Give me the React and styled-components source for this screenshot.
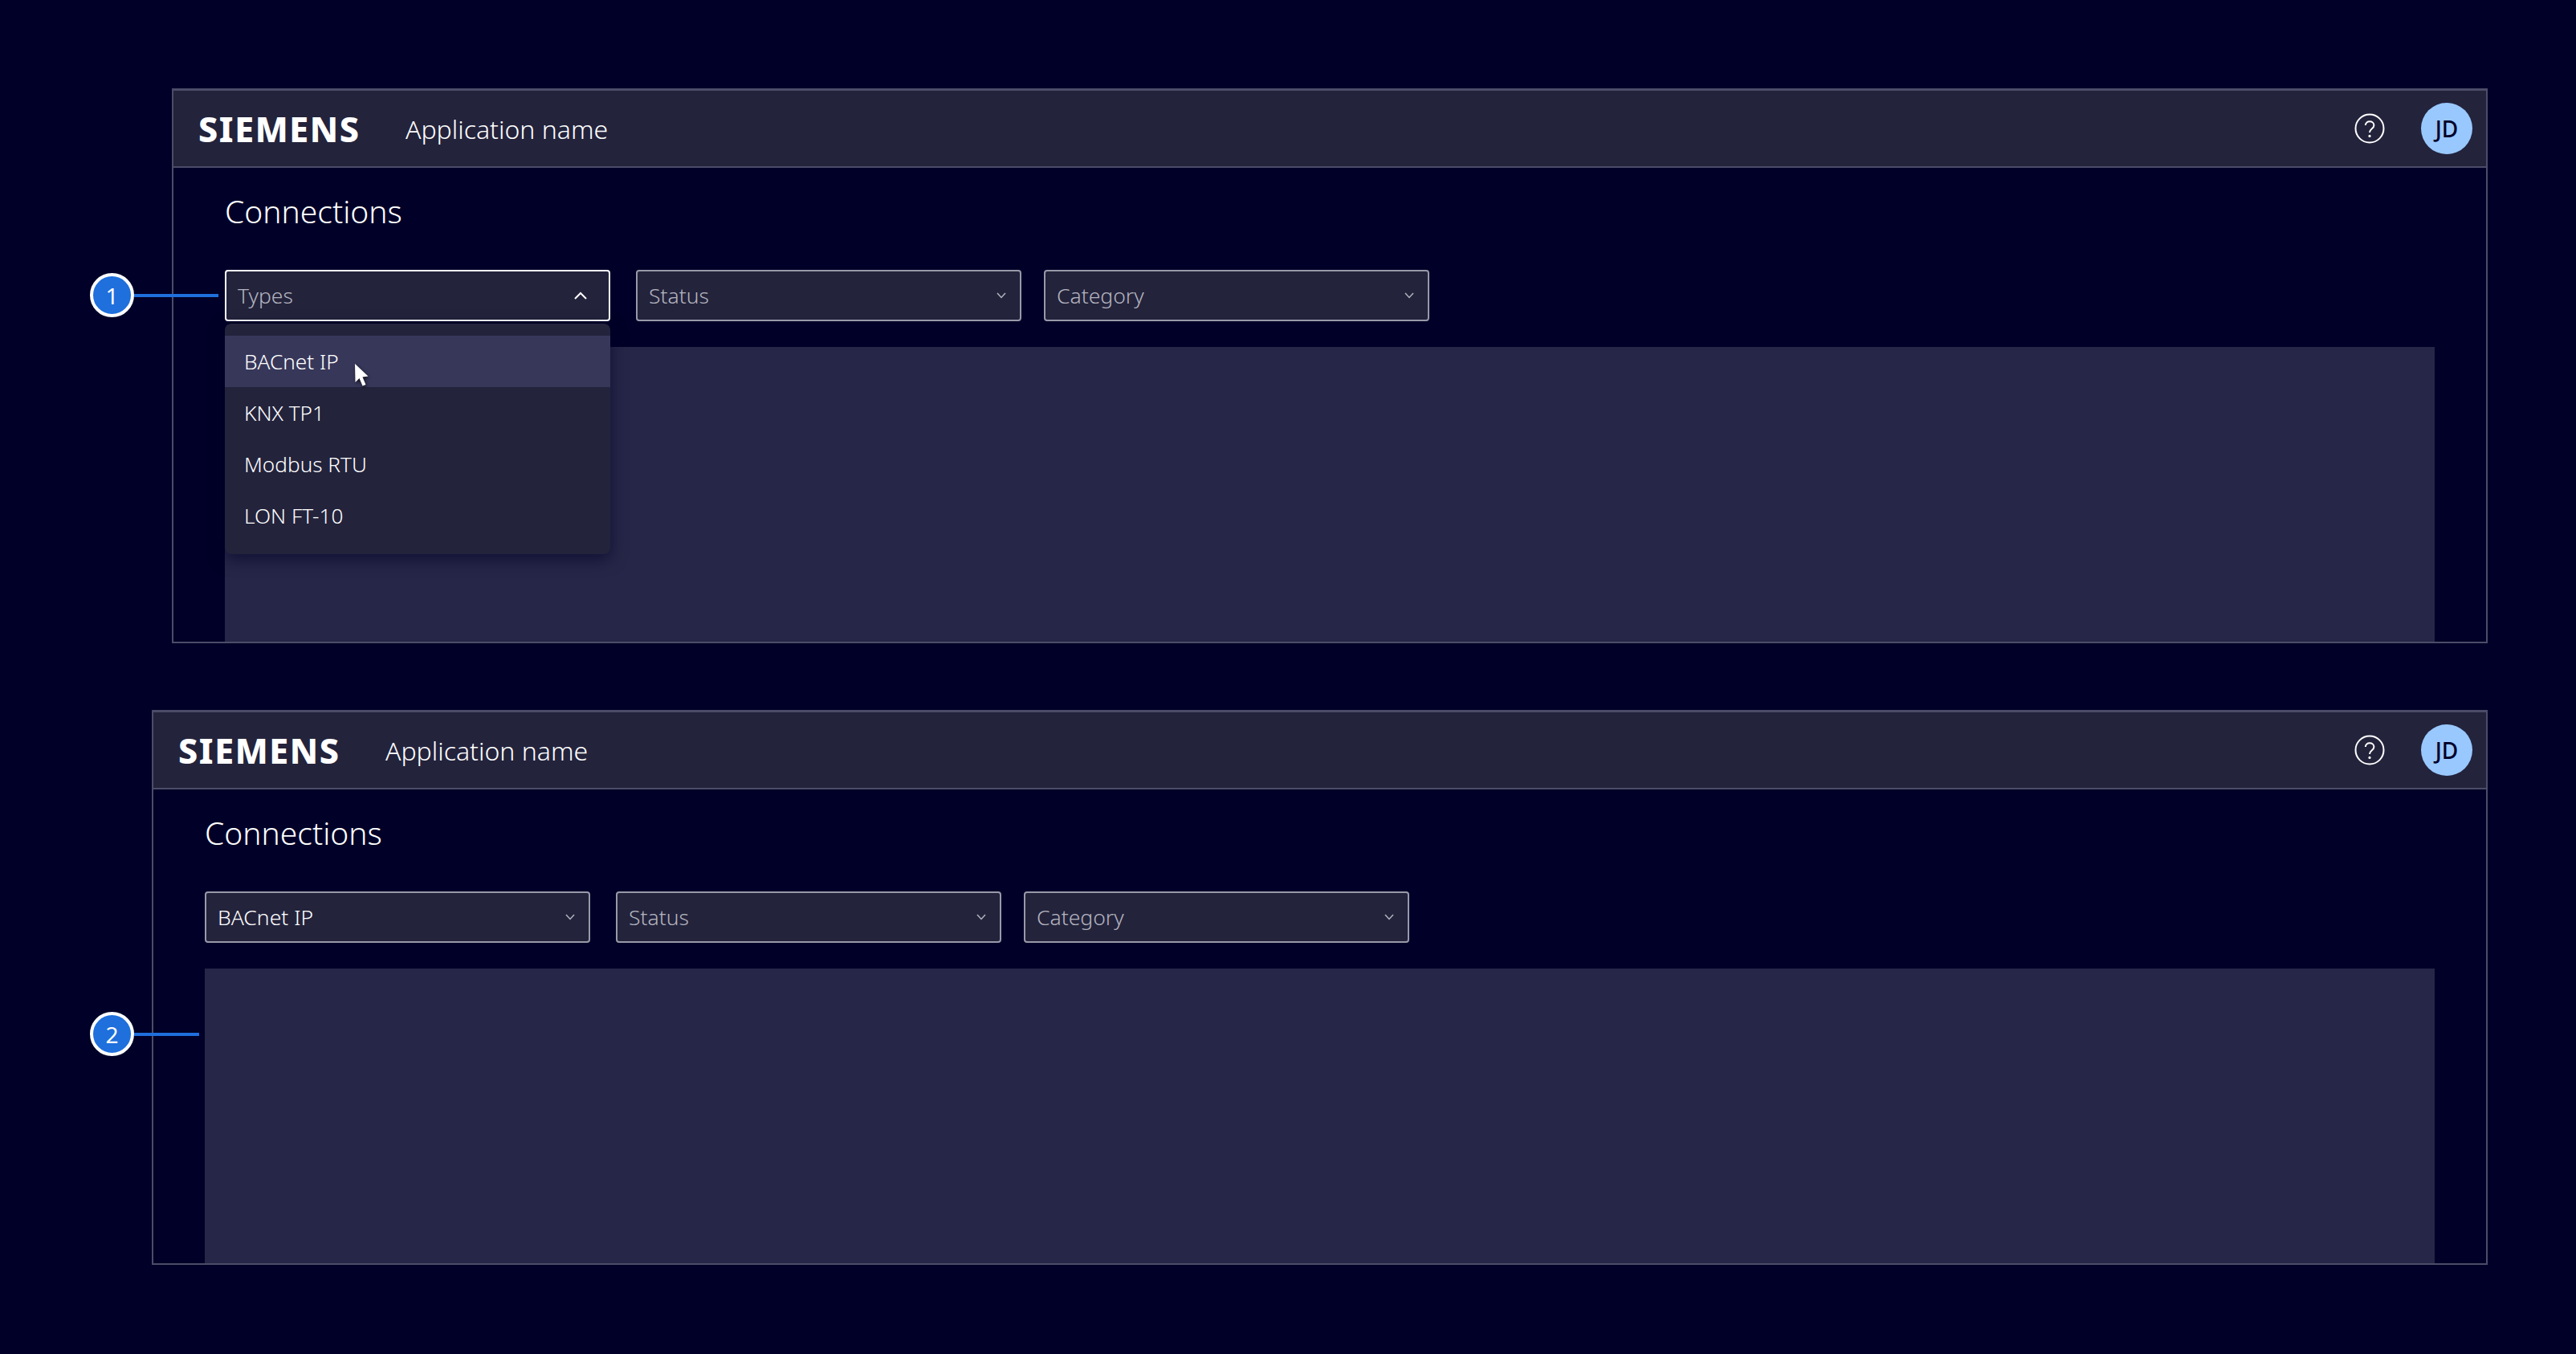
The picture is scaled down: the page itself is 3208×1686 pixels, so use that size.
import styled, { createGlobalStyle } from 'styled-components';

const GlobalStyle = createGlobalStyle`
    html, body {
        margin: 0;
        padding: 0;
        background: #000028;
    }
    body {
        font-family: "Noto Sans", "Open Sans", sans-serif;
        color: #fff;
    }
`;

const Chevron = ({ up }) => (
    up ? (
        <svg width="18" height="12" viewBox="0 0 18 12" fill="none">
            <path d="M2 10 L9 3 L16 10" stroke="#fff" strokeWidth="2" />
        </svg>
    ) : (
        <svg width="14" height="10" viewBox="0 0 14 10" fill="none">
            <path d="M2 2 L7 7.5 L12 2" stroke="#b3b3be" strokeWidth="1.5" />
        </svg>
    )
);

const HelpIcon = () => (
    <svg width="38" height="38" viewBox="0 0 38 38" fill="none">
        <circle cx="19" cy="19" r="17.5" stroke="#fff" strokeWidth="2" />
        <path d="M13.8 15 C13.8 8.6 24.4 8.8 24.4 15 C24.4 19.4 19 19 19 24" stroke="#fff" strokeWidth="2" />
        <circle cx="19" cy="28.4" r="1.6" fill="#fff" />
    </svg>
);

const Cursor = () => (
    <CursorSvg width="20" height="30" viewBox="0 0 20 30">
        <path d="M1 1 L1.5 24 L6.5 19 L10.5 28.5 L14.5 27 L10.5 17.5 L17.5 16.5 Z" fill="#fff" />
    </CursorSvg>
);

function Header() {
    return (
        <TopBar>
            <Logo>SIEMENS</Logo>
            <AppName>Application name</AppName>
            <HelpButton><HelpIcon /></HelpButton>
            <Avatar>JD</Avatar>
        </TopBar>
    );
}

const OPTIONS = ['BACnet IP', 'KNX TP1', 'Modbus RTU', 'LON FT-10'];

export default function App() {
    return (
        <Page>
            <GlobalStyle />

            <Frame $left={214}>
                <Callout $left={-104} $top={228} $lineWidth={105}>1</Callout>
                <Header />
                <Main>
                    <Title>Connections</Title>
                    <Filters>
                        <Select $open>
                            <Placeholder>Types</Placeholder>
                            <Chevron up />
                            <Dropdown>
                                {OPTIONS.map((option, i) => (
                                    <Option key={option} $hover={i === 0}>
                                        {option}
                                        {i === 0 && <Cursor />}
                                    </Option>
                                ))}
                            </Dropdown>
                        </Select>
                        <Select>
                            <Placeholder>Status</Placeholder>
                            <Chevron />
                        </Select>
                        <Select>
                            <Placeholder>Category</Placeholder>
                            <Chevron />
                        </Select>
                    </Filters>
                    <ContentArea />
                </Main>
            </Frame>

            <Frame $left={189}>
                <Callout $left={-79} $top={374} $lineWidth={81}>2</Callout>
                <Header />
                <Main>
                    <Title>Connections</Title>
                    <Filters>
                        <Select>
                            <Value>BACnet IP</Value>
                            <Chevron />
                        </Select>
                        <Select>
                            <Placeholder>Status</Placeholder>
                            <Chevron />
                        </Select>
                        <Select>
                            <Placeholder>Category</Placeholder>
                            <Chevron />
                        </Select>
                    </Filters>
                    <ContentArea />
                </Main>
            </Frame>
        </Page>
    );
}

const Page = styled.div`
    width: 3208px;
    height: 1686px;
    box-sizing: border-box;
    padding: 110px 110px 0 0;
    display: flex;
    flex-direction: column;
    align-items: flex-end;
    gap: 83px;
    overflow: hidden;
`;

const Frame = styled.section`
    position: relative;
    width: ${(props) => 3098 - props.$left}px;
    height: 691px;
    box-sizing: border-box;
    border: 2px solid #4c4c68;
    display: flex;
    flex-direction: column;
`;

const Callout = styled.div`
    position: absolute;
    top: ${(props) => props.$top}px;
    left: ${(props) => props.$left}px;
    width: 55px;
    height: 55px;
    box-sizing: border-box;
    border-radius: 50%;
    border: 4px solid #fff;
    background: #1f6fdc;
    color: #fff;
    font-size: 28px;
    font-weight: 400;
    display: flex;
    align-items: center;
    justify-content: center;

    &::after {
        content: "";
        position: absolute;
        left: 51px;
        top: 22px;
        width: ${(props) => props.$lineWidth}px;
        height: 4px;
        background: #1f6fdc;
    }
`;

const TopBar = styled.header`
    height: 97px;
    flex: none;
    box-sizing: border-box;
    background: #23233c;
    border-top: 1px solid #4c4c68;
    border-bottom: 2px solid #4c4c68;
    padding: 0 17px 0 31px;
    display: flex;
    align-items: center;
`;

const Logo = styled.div`
    width: 204px;
    font-weight: 800;
    font-size: 43px;
    letter-spacing: 1.6px;
    line-height: 1;
    white-space: nowrap;
    color: #fff;
`;

const AppName = styled.div`
    margin-left: 54px;
    font-size: 32px;
    font-weight: 300;
    color: #fff;
`;

const HelpButton = styled.div`
    margin-left: auto;
    display: flex;
`;

const Avatar = styled.div`
    margin-left: 45px;
    width: 64px;
    height: 64px;
    border-radius: 50%;
    background: #99c8ff;
    color: #000028;
    font-size: 28px;
    font-weight: 500;
    display: flex;
    align-items: center;
    justify-content: center;
`;

const Main = styled.main`
    flex: 1;
    min-height: 0;
    padding: 0 64px;
    display: flex;
    flex-direction: column;
`;

const Title = styled.h1`
    margin: 28px 0 0;
    font-size: 39px;
    line-height: 52px;
    font-weight: 300;
    color: #fff;
`;

const Filters = styled.div`
    display: flex;
    gap: 28px;
    margin-top: 47px;
`;

const Select = styled.div`
    position: relative;
    width: 480px;
    height: 64px;
    box-sizing: border-box;
    background: #23233c;
    border: 2px solid ${(props) => (props.$open ? '#fff' : '#9999a9')};
    border-radius: 4px;
    padding: 0 ${(props) => (props.$open ? 26 : 16)}px 0 14px;
    display: flex;
    align-items: center;
    justify-content: space-between;

    &:first-child {
        margin-right: 4px;
    }
`;

const Placeholder = styled.span`
    font-size: 26.5px;
    font-weight: 300;
    color: #b3b3be;
`;

const Value = styled.span`
    font-size: 26.5px;
    font-weight: 300;
    color: #fff;
`;

const Dropdown = styled.div`
    position: absolute;
    z-index: 2;
    top: 65px;
    left: -2px;
    width: 480px;
    box-sizing: border-box;
    padding: 15px 0 16px;
    background: #23233c;
    border-radius: 8px;
    box-shadow: 0 6px 20px rgba(0, 0, 40, 0.6);
`;

const Option = styled.div`
    position: relative;
    height: 64px;
    padding-left: 24px;
    display: flex;
    align-items: center;
    font-size: 26.2px;
    font-weight: 300;
    color: #fff;
    background: ${(props) => (props.$hover ? '#37375a' : 'transparent')};
`;

const CursorSvg = styled.svg`
    position: absolute;
    left: 161px;
    top: 34px;
    filter: drop-shadow(1px 2px 2px rgba(0, 0, 0, 0.7));
`;

const ContentArea = styled.div`
    flex: 1;
    margin-top: 32px;
    background: #262648;
`;
